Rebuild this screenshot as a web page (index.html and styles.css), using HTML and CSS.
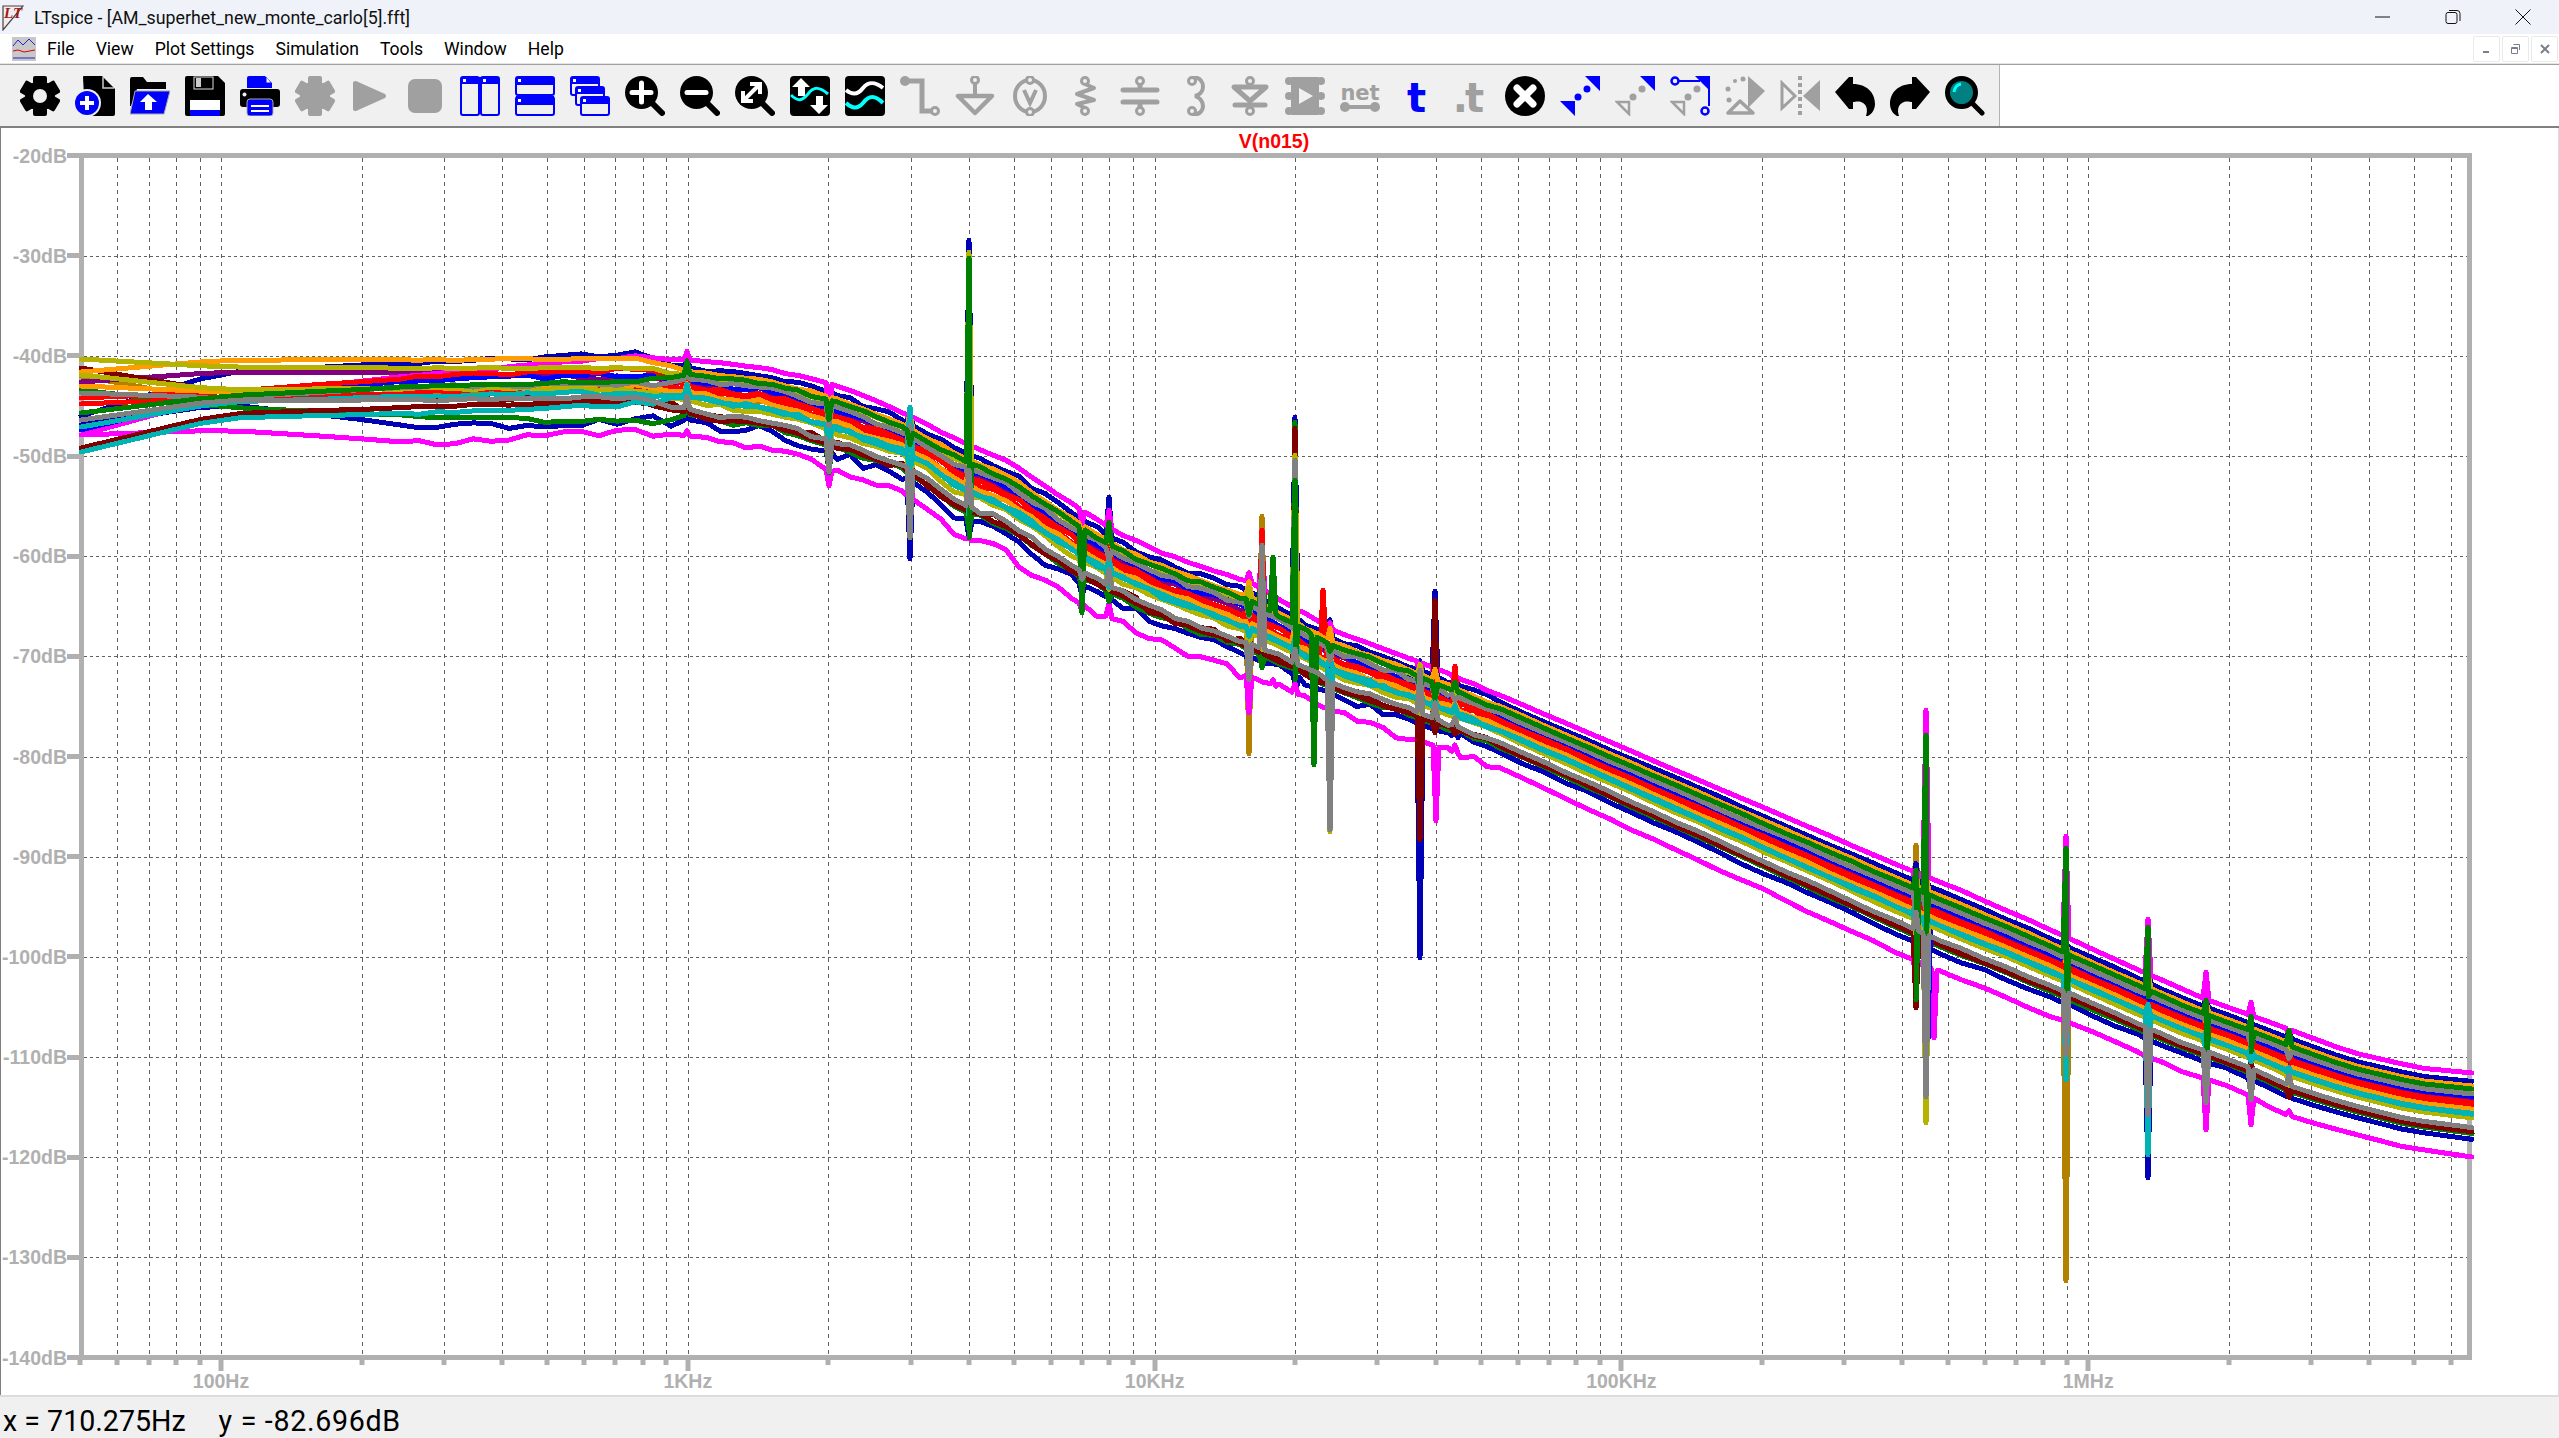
FILE: index.html
```html
<!DOCTYPE html>
<html lang="en">
<head>
  <meta charset="UTF-8">
  <title>LTspice - [AM_superhet_new_monte_carlo[5].fft]</title>
  <link rel="stylesheet" href="styles.css">
</head>
<body>
  <div class="titlebar">
    <svg class="app-logo" viewBox="0 0 22 28">
      <path d="M1 3 H21 L1 27 Z" fill="#f4ecec" stroke="#444" stroke-width="1.2"/>
      <text x="2" y="15" class="logo-text">LT</text>
    </svg>
    <span class="title-text">LTspice - [AM_superhet_new_monte_carlo[5].fft]</span>
    <div class="win-buttons">
      <svg class="win-btn" viewBox="0 0 16 16"><path d="M0 8 H15" stroke="#111" fill="none"/></svg>
      <svg class="win-btn" viewBox="0 0 16 16"><rect x="1" y="3.5" width="11" height="11" rx="2" stroke="#111" fill="none"/><path d="M4 1.5 H12 Q15 1.5 15 4.5 V12" stroke="#111" fill="none"/></svg>
      <svg class="win-btn" viewBox="0 0 16 16"><path d="M0.5 0.5 L15.5 15.5 M15.5 0.5 L0.5 15.5" stroke="#111" fill="none"/></svg>
    </div>
  </div>

  <div class="menubar">
    <svg class="doc-icon" viewBox="0 0 24 24">
      <rect width="24" height="24" fill="#c8c8c8"/>
      <path d="M1 9 L6 3 L11 8 L17 2 L23 8" stroke="#2222cc" fill="none"/>
      <path d="M1 14 L6 13 L12 15 L23 13" stroke="#dd0000" fill="none"/>
      <path d="M1 21 H23" stroke="#2222cc" fill="none"/>
    </svg>
    <span class="menu-item">File</span>
    <span class="menu-item">View</span>
    <span class="menu-item">Plot Settings</span>
    <span class="menu-item">Simulation</span>
    <span class="menu-item">Tools</span>
    <span class="menu-item">Window</span>
    <span class="menu-item">Help</span>
    <div class="mdi-buttons">
      <div class="mdi-btn"><svg viewBox="0 0 12 12" width="12" height="12"><path d="M2 9 H8" stroke="#77808c" stroke-width="2"/></svg></div>
      <div class="mdi-btn"><svg viewBox="0 0 12 12" width="12" height="12"><path d="M3.5 1.5 H9.5 V7 M1.5 4.5 H7.5 V10.5 H1.5 Z M1.5 5.5 H7.5" stroke="#77808c" fill="none"/></svg></div>
      <div class="mdi-btn"><svg viewBox="0 0 12 12" width="12" height="12"><path d="M2 2 L10 10 M10 2 L2 10" stroke="#77808c" stroke-width="2"/></svg></div>
    </div>
  </div>

  <div class="toolbar-row">
    <div class="toolbar">
      <!-- control panel -->
      <svg class="ico" viewBox="0 0 40 40"><g fill="#000"><circle cx="20" cy="20" r="15"/><rect x="13" y="0" width="14" height="40" rx="2"/><rect x="13" y="0" width="14" height="40" rx="2" transform="rotate(60 20 20)"/><rect x="13" y="0" width="14" height="40" rx="2" transform="rotate(120 20 20)"/></g><circle cx="20" cy="20" r="7" fill="#f0f0f0"/></svg>
      <!-- new -->
      <svg class="ico" viewBox="0 0 40 40"><path d="M8 1 Q8 0 9 0 H27 L40 13 V38 Q40 40 38 40 H10 Z" fill="#000"/><path d="M28 1 V12 H39" fill="none" stroke="#ccc" stroke-width="1.5"/><circle cx="12" cy="27" r="14" fill="#f0f0f0"/><circle cx="12" cy="27" r="12" fill="#00f"/><path d="M12 20 V34 M5 27 H19" stroke="#fff" stroke-width="4"/></svg>
      <!-- open -->
      <svg class="ico" viewBox="0 0 40 40"><path d="M0 3 Q0 1 2 1 H13 L17 6 H36 V13 H7 L1 30 H0 Z" fill="#000"/><path d="M5 15 H40 L34 38 H0 Z" fill="#00f" stroke="#aaa"/><path d="M18 18 L27 26 H22 V34 H15 V26 H10 Z" fill="#fff"/></svg>
      <!-- save -->
      <svg class="ico" viewBox="0 0 40 40"><path d="M0 2 Q0 0 2 0 H33 L40 7 V38 Q40 40 38 40 H2 Q0 40 0 38 Z" fill="#000"/><rect x="9" y="1" width="19" height="12" fill="#000" stroke="#ddd"/><rect x="11" y="2" width="5" height="9" fill="#ccc"/><rect x="5" y="24" width="30" height="10" fill="#fff"/><rect x="5" y="34" width="30" height="6" fill="#00f"/></svg>
      <!-- print -->
      <svg class="ico" viewBox="0 0 40 40"><path d="M7 2 Q7 0 9 0 H25 L32 7 V12 H7 Z" fill="#00f"/><path d="M26 1 V7 H31" fill="#fff" stroke="#00f"/><rect x="0" y="13" width="40" height="18" rx="3" fill="#000"/><circle cx="4.5" cy="18.5" r="2" fill="#eee"/><rect x="7" y="23" width="26" height="17" rx="3" fill="#00f" stroke="#aaa"/><path d="M11 30 H29 M11 35 H29" stroke="#fff" stroke-width="2"/></svg>
      <!-- halt, disabled run / stop -->
      <svg class="ico" viewBox="0 0 40 40"><g fill="#a0a0a0"><circle cx="20" cy="20" r="15"/><rect x="13" y="0" width="14" height="40" rx="2"/><rect x="13" y="0" width="14" height="40" rx="2" transform="rotate(60 20 20)"/><rect x="13" y="0" width="14" height="40" rx="2" transform="rotate(120 20 20)"/></g></svg>
      <svg class="ico" viewBox="0 0 40 40"><path d="M6 5 L35 18 Q37 20 35 22 L6 35 Q3 35 3 33 V7 Q3 5 6 5 Z" fill="#a0a0a0"/></svg>
      <svg class="ico" viewBox="0 0 40 40"><rect x="3" y="3" width="34" height="34" rx="7" fill="#a0a0a0"/></svg>
      <!-- tile / cascade -->
      <svg class="ico" viewBox="0 0 40 40"><g fill="#f0f0f0" stroke="#00f" stroke-width="2"><rect x="1" y="1" width="18" height="38" rx="2"/><rect x="21" y="1" width="18" height="38" rx="2"/></g><path d="M1 1 H39 V8 H1 Z" fill="#00f"/><rect x="3" y="3" width="3" height="3" fill="#fff"/><rect x="23" y="3" width="3" height="3" fill="#fff"/></svg>
      <svg class="ico" viewBox="0 0 40 40"><g fill="#f0f0f0" stroke="#00f" stroke-width="2"><rect x="1" y="1" width="38" height="18" rx="2"/><rect x="1" y="21" width="38" height="18" rx="2"/></g><path d="M1 1 H39 V9 H1 Z M1 20 H39 V29 H1 Z" fill="#00f"/><rect x="3" y="3" width="3" height="3" fill="#fff"/><rect x="3" y="23" width="3" height="3" fill="#fff"/></svg>
      <svg class="ico" viewBox="0 0 40 40"><g fill="#f0f0f0" stroke="#00f" stroke-width="2"><rect x="1" y="1" width="28" height="18" rx="2"/><rect x="6" y="11" width="28" height="18" rx="2"/><rect x="11" y="21" width="28" height="18" rx="2"/></g><path d="M1 1 H29 V8 H1 Z M6 11 H34 V18 H6 Z M11 21 H39 V28 H11 Z" fill="#00f"/><rect x="3" y="3" width="3" height="3" fill="#fff"/><rect x="8" y="13" width="3" height="3" fill="#fff"/><rect x="13" y="23" width="3" height="3" fill="#fff"/></svg>
      <!-- zoom in / out / fit -->
      <svg class="ico" viewBox="0 0 40 40"><path d="M28 28 L37 37" stroke="#000" stroke-width="6" stroke-linecap="round"/><circle cx="16.500" cy="16.500" r="16.500" fill="#000"/><path d="M16.500 7 V26 M7 16.500 H26" stroke="#fff" stroke-width="5" stroke-linecap="round"/></svg>
      <svg class="ico" viewBox="0 0 40 40"><path d="M28 28 L37 37" stroke="#000" stroke-width="6" stroke-linecap="round"/><circle cx="16.500" cy="16.500" r="16.500" fill="#000"/><path d="M7 16.500 H26" stroke="#fff" stroke-width="5" stroke-linecap="round"/></svg>
      <svg class="ico" viewBox="0 0 40 40"><path d="M28 28 L37 37" stroke="#000" stroke-width="6" stroke-linecap="round"/><circle cx="16.500" cy="16.500" r="16.500" fill="#000"/><path d="M10 23 L23 10 M15 8 H25 V18 M8 15 V25 H18" stroke="#fff" stroke-width="4" fill="none"/></svg>
      <!-- autorange / trace -->
      <svg class="ico" viewBox="0 0 40 40"><rect width="40" height="40" rx="4" fill="#000"/><path d="M1 19 C8 26 12 25 18 18 C24 10 30 11 38 18" stroke="#0ff" stroke-width="3" fill="none"/><path d="M11 2 L20 11 H15 V20 H8 V11 H2 Z" fill="#fff"/><path d="M29 38 L38 29 H33 V20 H26 V29 H20 Z" fill="#fff"/></svg>
      <svg class="ico" viewBox="0 0 40 40"><rect width="40" height="40" rx="4" fill="#000"/><path d="M1 14 C6 18 12 20 18 12 C24 5 30 6 38 12" stroke="#fff" stroke-width="4" fill="none"/><path d="M1 27 C6 32 12 34 18 27 C24 19 30 19 38 27" stroke="#0ff" stroke-width="4" fill="none"/></svg>
      <!-- schematic parts, disabled -->
      <svg class="ico" viewBox="0 0 40 40"><path d="M5 5 H22 V35 H33" stroke="#a0a0a0" stroke-width="5" fill="none"/><circle cx="5" cy="5" r="5" fill="#a0a0a0"/><circle cx="35" cy="35" r="3.500" fill="#f0f0f0" stroke="#a0a0a0" stroke-width="3"/></svg>
      <svg class="ico" viewBox="0 0 40 40"><path d="M20 8 V20" stroke="#a0a0a0" stroke-width="4"/><circle cx="20" cy="4" r="3.500" fill="#f0f0f0" stroke="#a0a0a0" stroke-width="3"/><path d="M3 20 H37 L20 37 Z" fill="none" stroke="#a0a0a0" stroke-width="4.500" stroke-linejoin="round"/></svg>
      <svg class="ico" viewBox="0 0 40 40"><ellipse cx="20" cy="20" rx="15" ry="16" fill="none" stroke="#a0a0a0" stroke-width="4"/><path d="M14 14 L20 27 L26 14" fill="none" stroke="#a0a0a0" stroke-width="4"/><circle cx="20" cy="4" r="3.500" fill="#f0f0f0" stroke="#a0a0a0" stroke-width="3"/><circle cx="20" cy="36" r="3.500" fill="#f0f0f0" stroke="#a0a0a0" stroke-width="3"/></svg>
      <svg class="ico" viewBox="0 0 40 40"><path d="M20 8 L29 12 L12 18 L29 24 L12 28 L20 32" fill="none" stroke="#a0a0a0" stroke-width="4" stroke-linejoin="round"/><circle cx="20" cy="5" r="3.500" fill="#f0f0f0" stroke="#a0a0a0" stroke-width="3"/><circle cx="20" cy="35" r="3.500" fill="#f0f0f0" stroke="#a0a0a0" stroke-width="3"/></svg>
      <svg class="ico" viewBox="0 0 40 40"><path d="M3 14 H37 M3 26 H37 M20 8 V14 M20 26 V32" stroke="#a0a0a0" stroke-width="5" stroke-linecap="round" fill="none"/><circle cx="20" cy="5" r="3.500" fill="#f0f0f0" stroke="#a0a0a0" stroke-width="3"/><circle cx="20" cy="35" r="3.500" fill="#f0f0f0" stroke="#a0a0a0" stroke-width="3"/></svg>
      <svg class="ico" viewBox="0 0 40 40"><path d="M17 1 C26 1 28 7 28 11 C28 16 24 19 20 20 C24 21 28 25 28 30 C28 35 24 39 17 39" fill="none" stroke="#a0a0a0" stroke-width="4"/><circle cx="17" cy="5" r="3.500" fill="#f0f0f0" stroke="#a0a0a0" stroke-width="3"/><circle cx="17" cy="35" r="3.500" fill="#f0f0f0" stroke="#a0a0a0" stroke-width="3"/></svg>
      <svg class="ico" viewBox="0 0 40 40"><path d="M4 11 H36 L20 25 Z" fill="none" stroke="#a0a0a0" stroke-width="5" stroke-linejoin="round"/><path d="M5 29 H35" stroke="#a0a0a0" stroke-width="5" stroke-linecap="round"/><path d="M20 8 V11 M20 29 V33" stroke="#a0a0a0" stroke-width="4"/><circle cx="20" cy="5" r="3.500" fill="#f0f0f0" stroke="#a0a0a0" stroke-width="3"/><circle cx="20" cy="35" r="3.500" fill="#f0f0f0" stroke="#a0a0a0" stroke-width="3"/></svg>
      <svg class="ico" viewBox="0 0 40 40"><rect x="6" y="1" width="28" height="38" rx="1" fill="#a0a0a0"/><g fill="#a0a0a0"><circle cx="4" cy="5" r="4"/><circle cx="36" cy="5" r="4"/><circle cx="4" cy="20" r="4"/><circle cx="36" cy="20" r="4"/><circle cx="4" cy="35" r="4"/><circle cx="36" cy="35" r="4"/></g><path d="M14 12 L28 20 L14 28 Z" fill="#f0f0f0"/></svg>
      <svg class="ico" viewBox="0 0 40 40"><text x="20" y="24" class="net-text">net</text><path d="M4 31 H36" stroke="#a0a0a0" stroke-width="4"/><circle cx="5" cy="31" r="5" fill="#a0a0a0"/><circle cx="35" cy="31" r="5" fill="#a0a0a0"/></svg>
      <svg class="ico ico-text" viewBox="0 0 40 40"><text x="20" y="36" class="t-text t-blue">t</text></svg>
      <svg class="ico ico-text" viewBox="0 0 40 40"><text x="17" y="36" class="t-text t-gray">.t</text></svg>
      <!-- delete, move, drag -->
      <svg class="ico" viewBox="0 0 40 40"><circle cx="20" cy="20" r="20" fill="#000"/><path d="M12 12 L28 28 M28 12 L12 28" stroke="#fff" stroke-width="7" stroke-linecap="round"/></svg>
      <svg class="ico" viewBox="0 0 40 40"><path d="M25 0 H40 V15 Z M0 25 H15 V40 Z" fill="#00f"/><circle cx="27" cy="13" r="3.500" fill="#00f"/><circle cx="18" cy="21" r="3.500" fill="#00f"/></svg>
      <svg class="ico" viewBox="0 0 40 40"><path d="M25 0 H40 V15 Z" fill="#00f"/><circle cx="27" cy="13" r="3.500" fill="#a0a0a0"/><circle cx="18" cy="21" r="3.500" fill="#a0a0a0"/><path d="M2 26 H14 V38 Z" fill="none" stroke="#a0a0a0" stroke-width="2.500"/></svg>
      <svg class="ico" viewBox="0 0 40 40"><path d="M25 0 H40 V15 Z" fill="#00f"/><path d="M8 5 H30 M39 8 V30" stroke="#00f" stroke-width="2"/><circle cx="5" cy="5" r="3.500" fill="#f0f0f0" stroke="#00f" stroke-width="2.500"/><circle cx="35" cy="35" r="3.500" fill="#f0f0f0" stroke="#00f" stroke-width="2.500"/><circle cx="27" cy="13" r="3.500" fill="#a0a0a0"/><circle cx="18" cy="21" r="3.500" fill="#a0a0a0"/><path d="M2 26 H14 V38 Z" fill="none" stroke="#a0a0a0" stroke-width="2.500"/></svg>
      <!-- rotate, mirror, disabled -->
      <svg class="ico" viewBox="0 0 40 40"><g fill="#a0a0a0"><path d="M23 0 L40 15 L23 32 Z"/><circle cx="18" cy="3" r="2.500"/><circle cx="10" cy="5" r="2"/><circle cx="3" cy="13" r="2.500"/><circle cx="4" cy="24" r="2.500"/></g><path d="M3 37 H28 L15 25 Z" fill="none" stroke="#a0a0a0" stroke-width="3.500" stroke-linejoin="round"/></svg>
      <svg class="ico" viewBox="0 0 40 40"><path d="M2 7 V32 L15 20 Z" fill="none" stroke="#a0a0a0" stroke-width="3"/><path d="M40 4 V35 L23 20 Z" fill="#a0a0a0"/><path d="M20 0 V40" stroke="#a0a0a0" stroke-width="4" stroke-dasharray="4 3"/></svg>
      <!-- undo, redo, find -->
      <svg class="ico" viewBox="0 0 40 40"><path d="M0 16 L14 1 L18 1 L18 8 C32 8 40 17 40 28 C40 33 37 38 33 40 L31 40 C33 34 32 28 26 26 C23 25 20 26 18 26 L18 33 L14 33 Z" fill="#000"/></svg>
      <svg class="ico" viewBox="0 0 40 40"><path d="M40 16 L26 1 L22 1 L22 8 C8 8 0 17 0 28 C0 33 3 38 7 40 L9 40 C7 34 8 28 14 26 C17 25 20 26 22 26 L22 33 L26 33 Z" fill="#000"/></svg>
      <svg class="ico" viewBox="0 0 40 40"><path d="M28 28 L37 37" stroke="#000" stroke-width="5" stroke-linecap="round"/><circle cx="16.500" cy="16.500" r="14" fill="#008080" stroke="#000" stroke-width="5"/><path d="M9 16 Q10 9 16 8" stroke="#0ff" stroke-width="3" fill="none"/></svg>
    </div>
  </div>

  <div class="plot-pane">
    <svg id="plot" class="plot" viewBox="0 128 2557 1267" width="2557" height="1267"></svg>
  </div>

  <div class="statusbar"><span>x = 710.275Hz</span><span class="status-y">y = -82.696dB</span></div>

  <script src="chart.js"></script>
</body>
</html>
```

FILE: styles.css
```css
body {
  margin: 0;
  height: 100vh;
  display: flex;
  flex-direction: column;
  overflow: hidden;
  background: #fff;
  font-family: Roboto, "Liberation Sans", sans-serif;
  color: #000;
}

.titlebar {
  height: 34px;
  display: flex;
  align-items: center;
  background: #eff3f9;
  flex: none;
}
.app-logo {
  width: 22px;
  height: 28px;
  margin-left: 2px;
}
.logo-text {
  font: italic bold 15px "Liberation Serif", serif;
  fill: #a01818;
}
.title-text {
  margin-left: 10px;
  font-size: 17.8px;
  color: #111;
}
.win-buttons {
  margin-left: auto;
  display: flex;
  gap: 54px;
  padding-right: 28px;
}
.win-btn {
  width: 16px;
  height: 16px;
}

.menubar {
  height: 30px;
  display: flex;
  align-items: center;
  flex: none;
  box-sizing: border-box;
  background: #fff;
  border-bottom: 1px solid #e4e4e4;
  font-size: 17.6px;
}
.doc-icon {
  width: 24px;
  height: 24px;
  margin: 0 11px 0 12px;
}
.menu-item {
  margin-right: 21px;
}
.mdi-buttons {
  margin-left: auto;
  display: flex;
  gap: 2px;
  padding-right: 1px;
}
.mdi-btn {
  width: 27px;
  height: 26px;
  display: flex;
  align-items: center;
  justify-content: center;
  border: 1px solid #eaeaea;
  box-sizing: border-box;
  border-radius: 2px;
}

.toolbar-row {
  height: 64px;
  flex: none;
  box-sizing: border-box;
  border-top: 1px solid #a0a0a0;
  border-bottom: 2px solid #808080;
  display: flex;
}
.toolbar {
  width: 2000px;
  box-sizing: border-box;
  background: #f0f0f0;
  border-right: 1px solid #b4b4b4;
  display: flex;
  align-items: center;
  gap: 15px;
  padding-left: 20px;
}
.ico {
  width: 40px;
  height: 40px;
  flex: none;
}
.ico-text {
  overflow: visible;
}
.net-text {
  font: bold 21px "DejaVu Sans", sans-serif;
  fill: #a0a0a0;
  text-anchor: middle;
}
.t-text {
  font: bold 40px "DejaVu Sans", sans-serif;
  text-anchor: middle;
  letter-spacing: -3px;
}
.t-blue {
  fill: #00f;
}
.t-gray {
  fill: #a0a0a0;
}

.plot-pane {
  flex: 1;
  min-height: 0;
  border-left: 1px solid #808080;
  border-right: 1px solid #dcdcdc;
  background: #fff;
}
.plot {
  display: block;
  margin-left: -1px;
}
.axis-label {
  font: bold 19.5px "Liberation Sans", sans-serif;
  fill: #b0b0b0;
}
.plot-title {
  font: bold 19.5px "Liberation Sans", sans-serif;
  fill: #f00;
  text-anchor: middle;
}

.statusbar {
  height: 43px;
  flex: none;
  box-sizing: border-box;
  border-top: 2px solid #dcdcdc;
  background: #f0f0f0;
  padding: 6px 0 0 3px;
  font-size: 28.6px;
  line-height: 36px;
  white-space: nowrap;
}
.status-y {
  margin-left: 33px;
  letter-spacing: .7px;
}
```

FILE: chart.js
```js
// FFT plot of the monte carlo run. All coordinates here are page pixels.
var svg = document.getElementById("plot");
var LEFT = 81, RIGHT = 2469.5, TOP = 155.5, BOTTOM = 1357.5;

function X(f) { return 221 + (Math.log10(f) - 2) * 466.8; }
function Y(db) { return TOP + (-20 - db) * 10.017; }

var out = "";

// grid
for (var db = -30; db >= -130; db -= 10) {
  out += '<path d="M84 ' + Math.round(Y(db)) + '.5 H2467" stroke="#606060" stroke-dasharray="3 3" shape-rendering="crispEdges"/>';
}
var ticks = "";
for (var dec = 10; dec <= 1e6; dec *= 10) {
  for (var k = 1; k <= 9; k++) {
    var f = dec * k;
    if (f < 50 || f > 6e6) continue;
    var x = Math.round(X(f));
    if (f > 50) {
      out += '<path d="M' + x + '.5 158 V1355" stroke="#606060" stroke-dasharray="4 4" shape-rendering="crispEdges"/>';
    }
    ticks += '<path d="M' + x + " 1358 V" + (k == 1 ? 1371 : 1365) + '" stroke="#b0b0b0" stroke-width="5"/>';
  }
}

// frame, ticks, labels
out += '<rect x="' + LEFT + '" y="' + TOP + '" width="' + (RIGHT - LEFT) + '" height="' + (BOTTOM - TOP) + '" fill="none" stroke="#b0b0b0" stroke-width="5" shape-rendering="crispEdges"/>';
out += ticks;
for (var d = -20; d >= -140; d -= 10) {
  var yy = Y(d);
  out += '<path d="M67 ' + yy + ' H80" stroke="#b0b0b0" stroke-width="5" shape-rendering="crispEdges"/>';
  out += '<text x="67" y="' + (yy + 7) + '" text-anchor="end" class="axis-label">' + d + "dB</text>";
}
[[100, "100Hz"], [1e3, "1KHz"], [1e4, "10KHz"], [1e5, "100KHz"], [1e6, "1MHz"]].forEach(function (l) {
  out += '<text x="' + X(l[0]) + '" y="1388" text-anchor="middle" class="axis-label">' + l[1] + "</text>";
});
out += '<text x="1274" y="148" class="plot-title">V(n015)</text>';

// upper and lower limit of the bundle, right of 1KHz
var UPPER = [[690,360],[765,368],[816,380],[835,385],[890,406],[960,441],[1010,463],[1080,509],[1120,534],[1170,556],[1250,582],[1330,629],[1400,654],[1500,695],[1900,866],[1960,890],[2040,925],[2100,953],[2200,997],[2280,1026],[2350,1052],[2420,1068],[2472,1073]];
var LOWER = [[690,436],[722,445],[770,448],[805,462],[860,481],[900,491],[934,513],[952,534],[996,549],[1014,559],[1045,582],[1081,604],[1104,615],[1144,634],[1184,652],[1237,672],[1300,695],[1336,713],[1411,738],[1496,766],[1942,973],[1984,989],[2047,1014],[2110,1040],[2173,1068],[2236,1089],[2287,1115],[2320,1125],[2404,1147],[2472,1157]];

function lerp(pts, x) {
  if (x <= pts[0][0]) return pts[0][1];
  for (var i = 1; i < pts.length; i++) {
    if (x <= pts[i][0]) {
      var a = pts[i - 1], b = pts[i];
      return a[1] + (b[1] - a[1]) * (x - a[0]) / (b[0] - a[0]);
    }
  }
  return pts[pts.length - 1][1];
}

// left: y at x=81,223,430,640. t: place between the limits. tips: x -> spike ends
var TRACES = [
  { c: "#b48000", t: .43, left: [376,402,394,390], tips: { 969: [250], 1249: [754], 1262: [516], 1434: [790], 1916: [845], 2066: [1281] } },
  { c: "#0000b4", t: .79, left: [425,404,427,422], j: 2, tips: { 910: [559], 1420: [958], 2148: [1178], 1296: [690] } },
  { c: "#0000b4", t: .10, left: [416,372,362,354], tips: { 969: [240], 1109: [497], 1295: [417], 1435: [591] } },
  { c: "#800080", t: .31, left: [382,372,372,378], tips: { 969: [300], 1922: [830], 1109: [560] } },
  { c: "#ff00ff", t: 0, left: [435,396,374,356], j: .4, tips: { 829: [418], 1109: [510], 1262: [545], 1926: [710], 2066: [836], 2148: [919], 2206: [972], 2251: [1002] } },
  { c: "#ff00ff", t: 1, left: [435,430,443,431], j: 2, tips: { 829: [486], 969: [538], 1249: [713], 1262: [682], 1273: [680], 1436: [821], 1934: [1038], 2063: [1128], 2144: [1092], 2206: [1130], 2251: [1125] } },
  { c: "#008000", t: .72, left: [390,407,417,423], tips: { 910: [500], 1295: [422] } },
  { c: "#800000", t: .68, left: [368,392,398,402], j: 2, tips: { 1262: [540], 1435: [600], 1420: [840] } },
  { c: "#800000", t: .70, left: [448,414,407,400], tips: { 1295: [428], 1916: [1008] } },
  { c: "#0000ff", t: .28, left: [430,395,380,374], tips: { 1109: [540], 1330: [800], 1928: [1040] } },
  { c: "#ff0000", t: .35, left: [398,392,376,369], tips: { 910: [413], 1262: [530], 1323: [590], 1455: [666] } },
  { c: "#ff0000", t: .39, left: [404,398,392,386], tips: {} },
  { c: "#ff9c00", t: .155, left: [372,360,360,358], j: .5, tips: { 1262: [590] } },
  { c: "#ff9c00", t: .43, left: [386,392,388,386], tips: { 1295: [620], 829: [455] } },
  { c: "#b4b400", t: .20, left: [359,367,368,368], j: .5, tips: { 969: [252], 1295: [455] } },
  { c: "#b4b400", t: .535, left: [375,390,388,390], tips: { 1330: [832], 1926: [1123] } },
  { c: "#00b4b4", t: .48, left: [427,402,396,392], tips: { 910: [407], 2066: [1080], 2148: [1155] } },
  { c: "#00b4b4", t: .49, left: [452,418,413,403], tips: { 1273: [640], 1330: [770] } },
  { c: "#808080", t: .25, left: [393,398,386,384], tips: { 1295: [460, 640] } },
  { c: "#008000", t: .19, left: [413,396,386,380], j: .7, tips: { 969: [258, 538], 1082: [613], 1109: [522], 1262: [565], 1273: [557], 1295: [480, 680], 1314: [765], 1916: [870, 1000], 1926: [735, 937], 2066: [848, 1038], 2148: [927, 997], 2206: [1000, 1095], 2251: [1016, 1052], 2289: [1030] } },
  { c: "#808080", t: .65, left: [420,400,400,398], tips: { 829: [472], 910: [538], 969: [470], 1249: [680], 1262: [545], 1330: [830], 1420: [670], 1926: [1097], 2066: [1055], 2148: [1115], 2206: [1103], 2251: [1100] } }
];

// spots where every trace kicks a little: x, smallest, largest, only down or up
var KICKS = [[687,-14,-4],[829,12,30],[910,6,22,1],[969,8,26,1],[1082,5,14],[1109,5,18,1],[1249,6,16,1],[1262,6,16,1],[1295,6,18,1],[1330,6,18,1],[1420,6,16,1],[1435,6,16,1],[1455,4,12,1],[1916,6,18,1],[1926,6,18,1],[2066,5,14,1],[2148,5,14,1],[2206,5,12,1],[2251,5,12,1],[2289,4,10,1]];

var seed = 7;
function rnd() {
  seed = (seed * 1664525 + 1013904223) % 4294967296;
  return seed / 4294967296;
}

function jitterAmp(x) {
  if (x < 300) return 0;
  if (x < 690) return 3.5 * (x - 300) / 390;
  if (x < 1500) return 2.5;
  if (x < 2300) return .7;
  return 0;
}

function drawTrace(tr) {
  function base(x) {
    if (x < 690) {
      var lx = [81, 223, 430, 640, 690];
      var ly = tr.left.concat(lerp(UPPER, 690) + tr.t * (lerp(LOWER, 690) - lerp(UPPER, 690)));
      var p = lx.map(function (v, i) { return [v, ly[i]]; });
      return lerp(p, x);
    }
    var u = lerp(UPPER, x);
    return u + tr.t * (lerp(LOWER, x) - u);
  }
  var spots = {};
  KICKS.forEach(function (k) {
    var a = k[1] + rnd() * (k[2] - k[1]);
    if (k[3] && rnd() < .5) a = -a;
    spots[k[0]] = [{ d: a }];
  });
  Object.keys(tr.tips).forEach(function (k) {
    spots[k] = tr.tips[k].map(function (v) { return { y: v }; });
  });
  var pts = [];
  var x = 81;
  while (x < 2472) {
    var amp = jitterAmp(x) * (tr.j === undefined ? 1 : tr.j);
    pts.push([x, base(x) + (rnd() - .5) * 2 * amp]);
    x += x < 400 ? 40 : x < 700 ? 18 : x < 1500 ? 13 : 22;
  }
  pts.push([2472, base(2472)]);
  Object.keys(spots).forEach(function (k) {
    var sx = +k;
    pts = pts.filter(function (p) { return Math.abs(p[0] - sx) > 5; });
    pts.push([sx - 3, base(sx - 3)]);
    pts.push([sx + 3, base(sx + 3)]);
    spots[k].forEach(function (s, i) {
      pts.push([sx + i * .01, s.y !== undefined ? s.y : base(sx) + s.d]);
    });
  });
  pts.sort(function (a, b) { return a[0] - b[0]; });
  var str = pts.map(function (p) { return p[0].toFixed(1) + "," + p[1].toFixed(1); }).join(" ");
  return '<polyline points="' + str + '" fill="none" stroke="' + tr.c + '" stroke-width="5" stroke-linejoin="round" stroke-linecap="round" shape-rendering="crispEdges"/>';
}

TRACES.forEach(function (tr) { out += drawTrace(tr); });
svg.innerHTML = out;
```
